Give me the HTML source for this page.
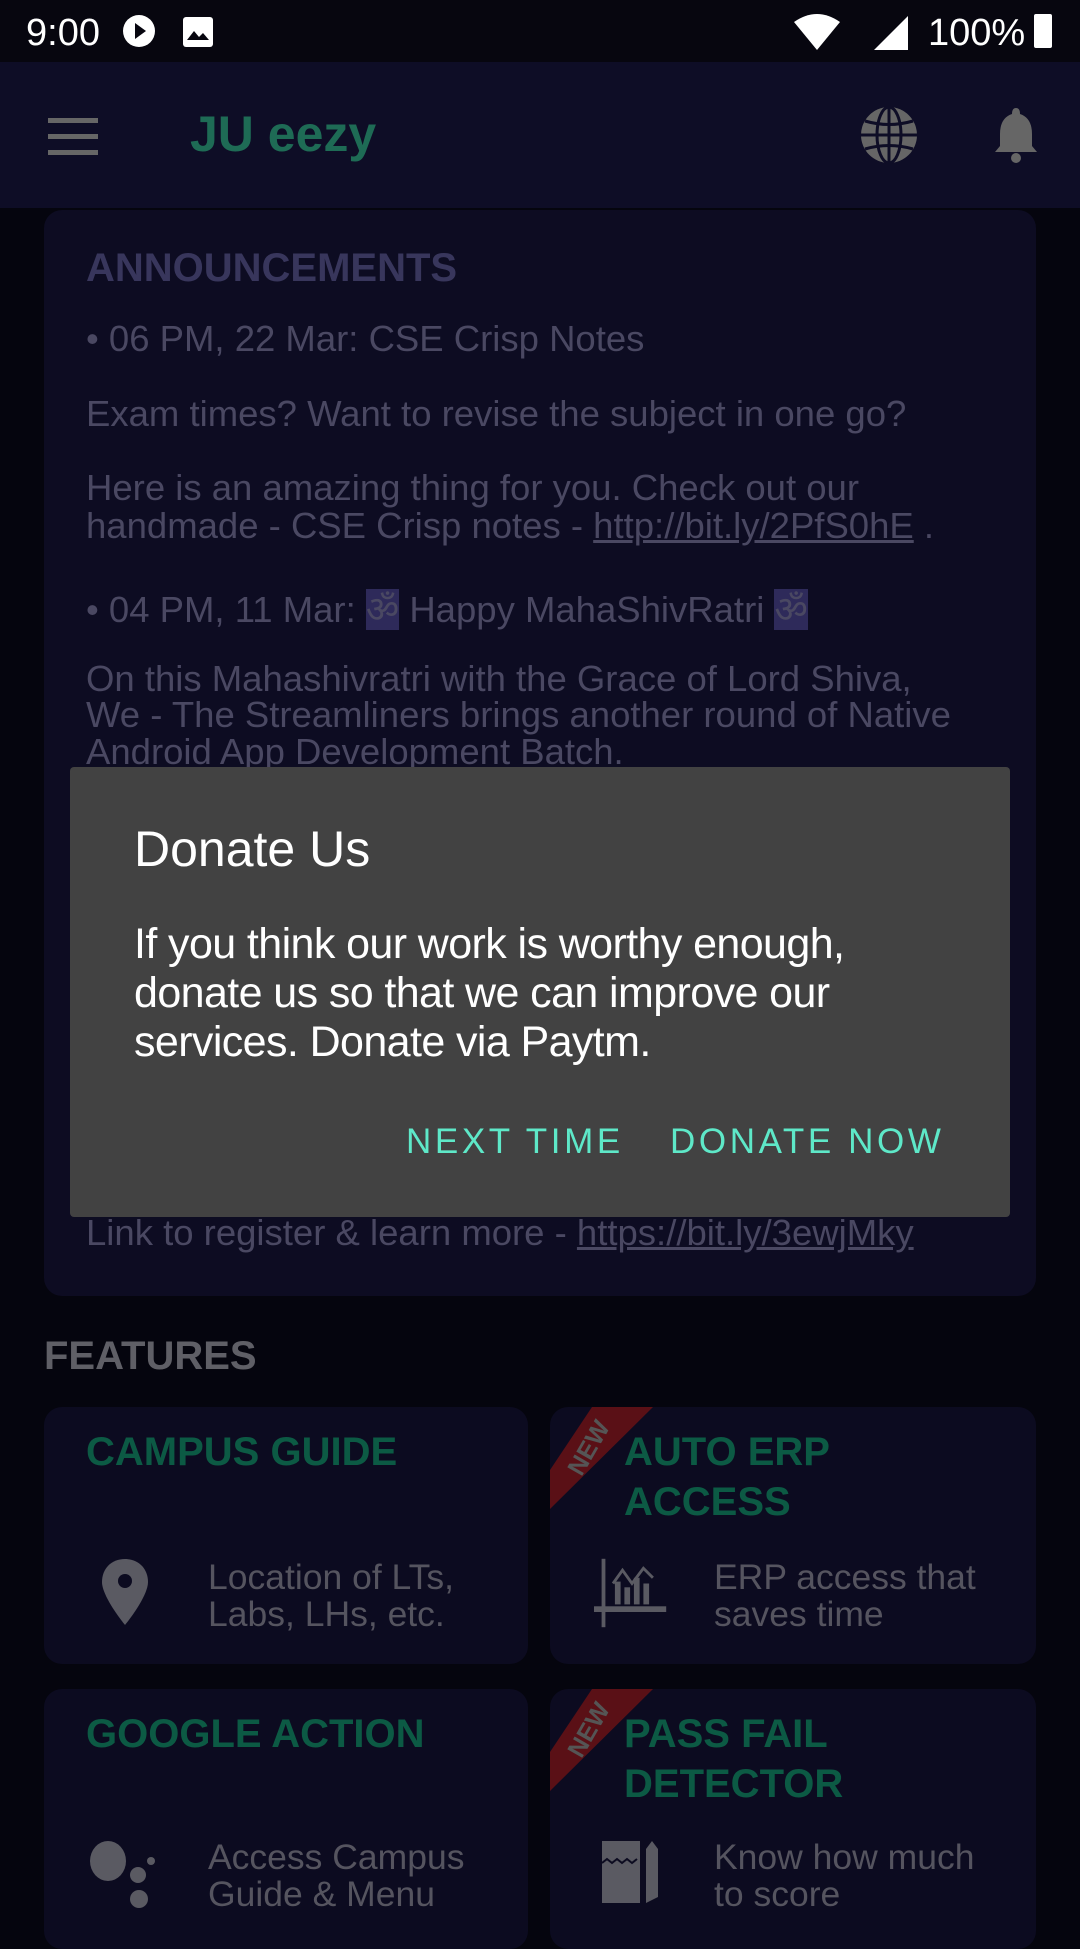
<!DOCTYPE html>
<html><head><meta charset="utf-8"><style>
*{margin:0;padding:0;box-sizing:border-box}
body{width:1080px;height:1920px;overflow:hidden;background:#05050e;font-family:"Liberation Sans",sans-serif;position:relative}
.abs{position:absolute}
.sb{left:0;top:0;width:1080px;height:76px;background:#07060f;color:#fff}
.ab{left:0;top:62px;width:1080px;height:146px;background:#0e0d26}
.card{background:#0d0c22;border-radius:18px}
.ann{left:44px;top:210px;width:992px;height:1086px}
.t{position:absolute;left:86px;color:#4a4862;font-size:36.5px;white-space:nowrap}
.t u{color:#4a4862}
.fc{background:#0c0b20;border-radius:18px;overflow:hidden}
.ft{position:absolute;color:#0c5a44;font-weight:bold;font-size:40px;line-height:50px}
.fd{position:absolute;color:#55545f;font-size:35.5px;line-height:37px}
.dlg{left:70px;top:767px;width:940px;height:450px;background:#424242;border-radius:4px}
.btn{position:absolute;top:1122px;color:#5ee8c8;font-size:35px;letter-spacing:3.6px}
.nw{position:absolute;left:4px;top:26px;width:70px;text-align:center;transform:rotate(-60deg);color:#555;font-weight:bold;font-size:25px;line-height:30px}
</style></head><body>
<div class="abs sb">
 <div class="abs" style="left:26px;top:12px;font-size:38px">9:00</div>
 <svg class="abs" style="left:122px;top:14px" width="34" height="34"><circle cx="17" cy="17" r="16" fill="#fff"/><path d="M13 9 L24 17 L13 25Z" fill="#07060f"/></svg>
 <svg class="abs" style="left:182px;top:16px" width="32" height="32"><rect x="1" y="1" width="30" height="30" rx="3" fill="#fff"/><path d="M5 24 L12 15 L17 21 L21 17 L27 24Z" fill="#07060f"/></svg>
 <svg class="abs" style="left:792px;top:14px" width="50" height="36"><path d="M2 8 Q25 -8 48 8 L25 36Z" fill="#fff"/></svg>
 <svg class="abs" style="left:870px;top:14px" width="40" height="36"><path d="M38 2 L38 36 L4 36Z" fill="#fff"/></svg>
 <div class="abs" style="left:928px;top:12px;font-size:38px">100%</div>
 <div class="abs" style="left:1034px;top:14px;width:18px;height:34px;background:#fff;border-radius:2px"></div>
</div>
<div class="abs ab">
 <div class="abs" style="left:48px;top:56px;width:50px;height:5px;background:#666;box-shadow:0 16px 0 #666,0 32px 0 #666"></div>
 <div class="abs" style="left:190px;top:43px;font-size:50px;font-weight:bold;color:#1e6b55">JU eezy</div>
 <svg class="abs" style="left:860px;top:44px" width="58" height="58" viewBox="0 0 58 58"><circle cx="29" cy="29" r="28" fill="#666"/><g stroke="#0e0d26" stroke-width="3" fill="none"><ellipse cx="29" cy="29" rx="12" ry="28"/><line x1="29" y1="1" x2="29" y2="57"/><line x1="1" y1="29" x2="57" y2="29"/><path d="M5 15 Q29 22 53 15"/><path d="M5 43 Q29 36 53 43"/></g></svg>
 <svg class="abs" style="left:994px;top:44px" width="44" height="58" viewBox="0 0 44 58"><path d="M22 2 Q26 2 26 8 Q38 12 38 28 L38 40 L43 46 L1 46 L6 40 L6 28 Q6 12 18 8 Q18 2 22 2Z" fill="#666"/><ellipse cx="22" cy="52" rx="5" ry="5" fill="#666"/></svg>
</div>
<div class="abs card ann">
 <div class="abs" style="left:42px;top:36px;font-size:40px;font-weight:bold;color:#38365c">ANNOUNCEMENTS</div>
</div>
<div class="t" style="top:318px">• 06 PM, 22 Mar: CSE Crisp Notes</div>
<div class="t" style="top:393px">Exam times? Want to revise the subject in one go?</div>
<div class="t" style="top:467px">Here is an amazing thing for you. Check out our</div>
<div class="t" style="top:505px">handmade - CSE Crisp notes - <u>http://bit.ly/2PfS0hE</u> .</div>
<div class="t" style="top:583px">• 04 PM, 11 Mar: <span style="background:#2e2a5a">ॐ</span> Happy MahaShivRatri <span style="background:#2e2a5a">ॐ</span></div>
<div class="t" style="top:658px">On this Mahashivratri with the Grace of Lord Shiva,</div>
<div class="t" style="top:694px">We - The Streamliners brings another round of Native</div>
<div class="t" style="top:731px">Android App Development Batch.</div>
<div class="t" style="top:1212px">Link to register &amp; learn more - <u>https://bit.ly/3ewjMky</u></div>

<div class="abs dlg"></div>
<div class="abs" style="left:134px;top:820px;font-size:50px;color:#fff">Donate Us</div>
<div class="abs" style="left:134px;top:920px;font-size:43px;line-height:49px;color:#fff;letter-spacing:-0.6px">If you think our work is worthy enough,<br>donate us so that we can improve our<br>services. Donate via Paytm.</div>
<div class="btn" style="left:406px">NEXT TIME</div>
<div class="btn" style="left:670px">DONATE NOW</div>

<div class="abs" style="left:44px;top:1334px;font-size:40px;font-weight:bold;color:#5f5f66">FEATURES</div>

<div class="abs fc" style="left:44px;top:1407px;width:484px;height:257px">
 <div class="ft" style="left:42px;top:20px">CAMPUS GUIDE</div>
 <svg class="abs" style="left:56px;top:150px" width="50" height="70" viewBox="0 0 50 70"><path d="M25 2 C11 2 2 12 2 25 C2 40 25 68 25 68 C25 68 48 40 48 25 C48 12 39 2 25 2Z" fill="#5a5a62"/><circle cx="25" cy="24" r="7" fill="#0c0b20"/></svg>
 <div class="fd" style="left:164px;top:152px">Location of LTs,<br>Labs, LHs, etc.</div>
</div>
<div class="abs fc" style="left:550px;top:1407px;width:486px;height:257px">
 <svg class="abs" style="left:0;top:0" width="110" height="110"><polygon points="42,0 103,0 0,102 0,63" fill="#5a1016" transform="translate(0,0)"/></svg>
 <div class="nw">NEW</div>
 <div class="ft" style="left:74px;top:20px">AUTO ERP<br>ACCESS</div>
 <svg class="abs" style="left:44px;top:150px" width="76" height="72" viewBox="0 0 80 72"><g fill="#5a5a62"><rect x="8" y="0" width="4" height="72"/><rect x="0" y="50" width="76" height="6"/><rect x="22" y="24" width="6" height="24"/><rect x="32" y="30" width="6" height="18"/><rect x="42" y="20" width="6" height="28"/><rect x="52" y="26" width="6" height="22"/></g><path d="M20 26 L30 12 L40 26 L52 10 L62 20" stroke="#5a5a62" stroke-width="3" fill="none"/></svg>
 <div class="fd" style="left:164px;top:152px">ERP access that<br>saves time</div>
</div>
<div class="abs fc" style="left:44px;top:1689px;width:484px;height:260px">
 <div class="ft" style="left:42px;top:20px">GOOGLE ACTION</div>
 <svg class="abs" style="left:44px;top:150px" width="70" height="80" viewBox="0 0 70 80"><g fill="#5a5a62"><ellipse cx="20" cy="22" rx="18" ry="20"/><circle cx="50" cy="36" r="8"/><circle cx="51" cy="60" r="9"/><circle cx="63" cy="22" r="4"/></g></svg>
 <div class="fd" style="left:164px;top:150px">Access Campus<br>Guide &amp; Menu</div>
</div>
<div class="abs fc" style="left:550px;top:1689px;width:486px;height:260px">
 <svg class="abs" style="left:0;top:0" width="110" height="110"><polygon points="42,0 103,0 0,102 0,63" fill="#5a1016"/></svg>
 <div class="nw">NEW</div>
 <div class="ft" style="left:74px;top:20px">PASS FAIL<br>DETECTOR</div>
 <svg class="abs" style="left:52px;top:152px" width="60" height="62" viewBox="0 0 60 62"><path d="M0 0 L38 0 L38 62 L0 62Z" fill="#5a5a62"/><path d="M0 22 L5 18 L10 22 L15 18 L20 22 L25 18 L30 22 L35 18" stroke="#0c0b20" stroke-width="2" fill="none"/><path d="M44 8 L50 0 L56 8 L56 56 L44 62Z" fill="#5a5a62"/></svg>
 <div class="fd" style="left:164px;top:150px">Know how much<br>to score</div>
</div>
</body></html>
